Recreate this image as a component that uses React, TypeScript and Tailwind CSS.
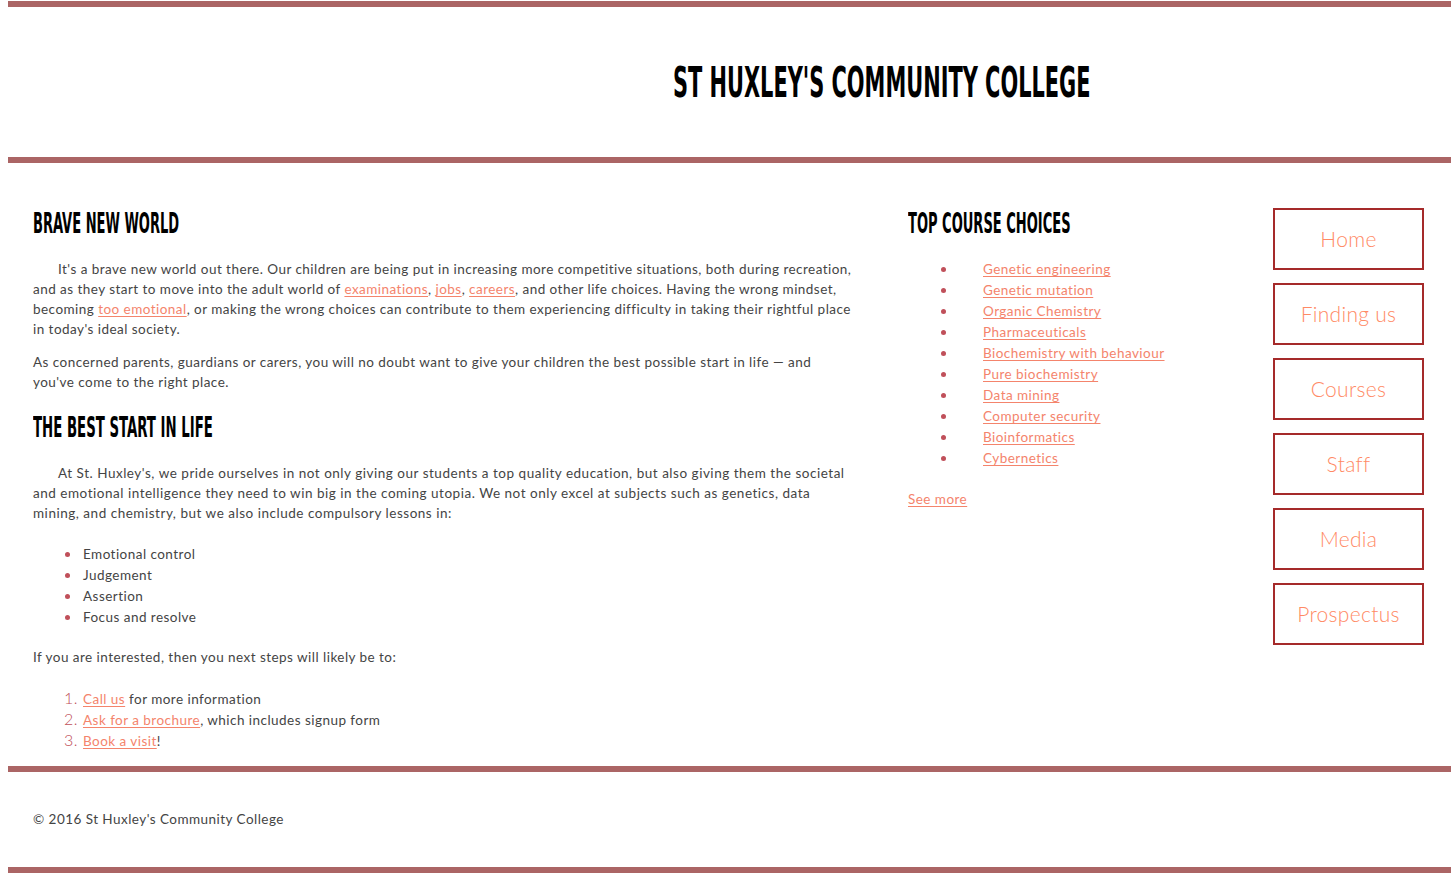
import React from "react";

const display = { fontFamily: '"Liberation Sans Narrow", "DejaVu Sans Condensed", sans-serif' };
const body = { fontFamily: 'Lato, "Open Sans", sans-serif' };

const courses = [
  "Genetic engineering",
  "Genetic mutation",
  "Organic Chemistry",
  "Pharmaceuticals",
  "Biochemistry with behaviour",
  "Pure biochemistry",
  "Data mining",
  "Computer security",
  "Bioinformatics",
  "Cybernetics",
];

const lessons = ["Emotional control", "Judgement", "Assertion", "Focus and resolve"];

const nav = ["Home", "Finding us", "Courses", "Staff", "Media", "Prospectus"];

function A({ children }: { children: React.ReactNode }) {
  return <a href="#" className="text-[#f4846c] underline underline-offset-2">{children}</a>;
}

function Heading({ children }: { children: React.ReactNode }) {
  return (
    <h2 style={display} className="h-[36px] leading-[36px] text-[29px] font-bold text-black whitespace-nowrap tracking-normal">
      <span className="inline-block origin-left scale-x-[0.5]">{children}</span>
    </h2>
  );
}

function Dot() {
  return <span className="w-[5px] h-[5px] rounded-full bg-[#c0505a] shrink-0" />;
}

function Step({ n, children }: { n: number; children: React.ReactNode }) {
  return (
    <li className="flex items-baseline h-[21px]">
      <span className="w-[50px] text-right pr-[5px] text-[16px] leading-[21px] font-light text-[#c0505a]">{n}.</span>
      <span>{children}</span>
    </li>
  );
}

export default function App() {
  return (
    <div style={body} className="pl-2 pt-px bg-white text-[#444] text-[13.5px] tracking-[0.46px] w-[1451px] min-h-[875px]">
      {/* Header */}
      <header className="h-[162px] border-y-[6px] border-[#ab6565] flex items-center pl-[665px]">
        <h1 style={display} className="text-[43px] font-bold text-black whitespace-nowrap leading-none tracking-normal">
          <span className="inline-block origin-left scale-x-[0.54]">ST HUXLEY'S COMMUNITY COLLEGE</span>
        </h1>
      </header>

      {/* Main */}
      <main className="flex h-[603px]">
        <section className="w-[855px] pl-[25px] pr-[8px] pt-[42px] leading-[20px]">
          <Heading>BRAVE NEW WORLD</Heading>
          <p className="mt-[18px] indent-[25px]">
            It's a brave new world out there. Our children are being put in increasing more competitive situations, both during recreation,
            and as they start to move into the adult world of <A>examinations</A>, <A>jobs</A>, <A>careers</A>, and other life choices. Having the wrong mindset,
            becoming <A>too emotional</A>, or making the wrong choices can contribute to them experiencing difficulty in taking their rightful place
            in today's ideal society.
          </p>
          <p className="mt-[13px]">
            As concerned parents, guardians or carers, you will no doubt want to give your children the best possible start in life — and
            you've come to the right place.
          </p>

          <div className="mt-[17px]">
            <h2 style={display} className="h-[36px] leading-[36px] text-[29px] font-bold text-black whitespace-nowrap tracking-normal">
              <span className="inline-block origin-left scale-x-[0.51]">THE BEST START IN LIFE</span>
            </h2>
          </div>
          <p className="mt-[18px] indent-[25px] tracking-[0.52px]">
            At St. Huxley's, we pride ourselves in not only giving our students a top quality education, but also giving them the societal
            and emotional intelligence they need to win big in the coming utopia. We not only excel at subjects such as genetics, data
            mining, and chemistry, but we also include compulsory lessons in:
          </p>
          <ul className="mt-[21px] leading-[21px]">
            {lessons.map((l) => (
              <li key={l} className="flex items-center pl-[32px] gap-[13px]">
                <Dot />
                {l}
              </li>
            ))}
          </ul>
          <p className="mt-[19px]">If you are interested, then you next steps will likely be to:</p>
          <ol className="mt-[20px] leading-[21px]">
            <Step n={1}><A>Call us</A> for more information</Step>
            <Step n={2}><A>Ask for a brochure</A>, which includes signup form</Step>
            <Step n={3}><A>Book a visit</A>!</Step>
          </ol>
        </section>

        <aside className="w-[365px] ml-[45px] pt-[42px]">
          <Heading>TOP COURSE CHOICES</Heading>
          <ul className="mt-[18px] leading-[21px]">
            {courses.map((c) => (
              <li key={c} className="flex items-center pl-[33px] gap-[37px]">
                <Dot />
                <A>{c}</A>
              </li>
            ))}
          </ul>
          <p className="mt-[20px] leading-[20px]">
            <A>See more</A>
          </p>
        </aside>

        <nav className="w-[151px] pt-[45px] flex flex-col gap-[13px]">
          {nav.map((n) => (
            <a
              key={n}
              href="#"
              className="h-[62px] border-2 border-[#a52a2a] flex items-center justify-center text-[21px] font-light text-[#ff8a65] tracking-[0.3px]"
            >
              {n}
            </a>
          ))}
        </nav>
      </main>

      {/* Footer */}
      <footer className="h-[107px] border-y-[6px] border-[#ab6565] pl-[25px] flex items-center">
        <p>© 2016 St Huxley's Community College</p>
      </footer>
    </div>
  );
}
